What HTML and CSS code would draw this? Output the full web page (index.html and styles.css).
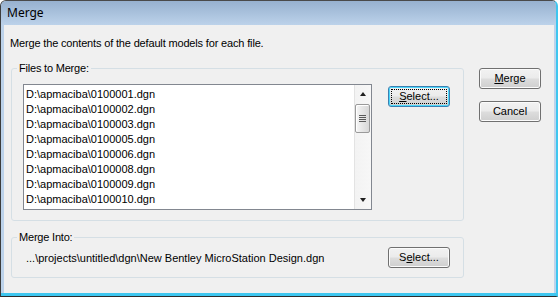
FILE: index.html
```html
<!DOCTYPE html>
<html>
<head>
<meta charset="utf-8">
<link rel="stylesheet" href="styles.css">
</head>
<body>
<div class="window">
  <div class="titlebar">Merge</div>
  <div class="client">
    <p class="desc">Merge the contents of the default models for each file.</p>
    <div class="main">
      <div class="groups">
        <fieldset class="group files">
          <legend>Files to Merge:</legend>
          <div class="files-row">
            <div class="listbox">
              <ul class="items">
                <li>D:\apmaciba\0100001.dgn</li>
                <li>D:\apmaciba\0100002.dgn</li>
                <li>D:\apmaciba\0100003.dgn</li>
                <li>D:\apmaciba\0100005.dgn</li>
                <li>D:\apmaciba\0100006.dgn</li>
                <li>D:\apmaciba\0100008.dgn</li>
                <li>D:\apmaciba\0100009.dgn</li>
                <li>D:\apmaciba\0100010.dgn</li>
              </ul>
              <div class="scrollbar">
                <div class="sb-btn"><span class="tri up"></span></div>
                <div class="sb-thumb"><span class="grip"></span><span class="grip"></span><span class="grip"></span><span class="grip"></span></div>
                <div class="sb-track"></div>
                <div class="sb-btn"><span class="tri down"></span></div>
              </div>
            </div>
            <button class="btn focused"><span class="focus-rect"><u>S</u>elect...</span></button>
          </div>
        </fieldset>
        <fieldset class="group into">
          <legend>Merge Into:</legend>
          <div class="into-row">
            <span class="path">...\projects\untitled\dgn\New Bentley MicroStation Design.dgn</span>
            <button class="btn">S<u>e</u>lect...</button>
          </div>
        </fieldset>
      </div>
      <div class="actions">
        <button class="btn"><u>M</u>erge</button>
        <button class="btn">Cancel</button>
      </div>
    </div>
  </div>
  <div class="bottom-edge"></div>
</div>
</body>
</html>
```

FILE: styles.css
```css
* { box-sizing: border-box; }
html, body { margin: 0; padding: 0; }
body {
  width: 558px;
  height: 297px;
  overflow: hidden;
  background: #ffffff;
  font-family: "Liberation Sans", Arial, sans-serif;
  font-size: 11px;
  color: #000;
}
.window {
  width: 558px;
  height: 297px;
  border-left: 1px solid #3d3d3d;
  border-top: 1px solid #4a4a4a;
  border-right: 2px solid #3ec6ef;
  border-bottom: 1px solid #2c2c2c;
  border-radius: 6px 6px 0 0;
  background: #bdd3eb;
  display: flex;
  flex-direction: column;
  overflow: hidden;
}
.titlebar {
  height: 24px;
  line-height: 23px;
  padding-left: 6px;
  font-family: "Noto Sans", "Open Sans", sans-serif;
  font-size: 12px;
  color: #000;
  background: linear-gradient(#97b1cf, #bcd2ea);
}
.client {
  width: 550px;
  height: 268px;
  margin-left: 3px;
  background: #f0f0f0;
  padding: 12px 0 0 6px;
}
.bottom-edge {
  height: 3px;
  background: #3ec6ef;
}
.desc {
  margin: 0;
  line-height: 13px;
  letter-spacing: -0.16px;
}
.main {
  display: flex;
  margin-top: 12px;
  margin-left: 1px;
}
.groups {
  width: 453px;
  display: flex;
  flex-direction: column;
}
.group {
  margin: 0;
  padding: 0;
  min-width: 0;
  border: 1px solid #d5dfe5;
  border-radius: 3px;
}
.group legend {
  margin-left: 5px;
  padding: 0 2px;
  line-height: 13px;
  letter-spacing: -0.2px;
  color: #000;
}
.into { margin-top: 10px; }
.files-row {
  display: flex;
  align-items: flex-start;
  padding: 9px 13px 10px 11px;
}
.listbox {
  width: 349px;
  height: 126px;
  border: 1px solid #828790;
  background: #fff;
  display: flex;
}
.items {
  list-style: none;
  margin: 0;
  padding: 2px 0 0 2px;
  flex: 1;
}
.items li {
  line-height: 15px;
  white-space: nowrap;
}
.scrollbar {
  width: 17px;
  display: flex;
  flex-direction: column;
  background: linear-gradient(to right, #e3e3e3 0, #e3e3e3 1px, #f3f3f3 1px, #f7f7f7 100%);
}
.sb-btn {
  height: 18px;
  display: flex;
  align-items: center;
  justify-content: center;
}
.tri {
  width: 0;
  height: 0;
  border-left: 3.5px solid transparent;
  border-right: 3.5px solid transparent;
}
.tri.up { border-bottom: 4px solid #202020; }
.tri.down { border-top: 4px solid #202020; }
.sb-thumb {
  height: 29px;
  margin: 1px 1px 0 1px;
  border: 1px solid #9a9a9a;
  border-radius: 2px;
  background: linear-gradient(to right, #f6f6f6, #e6e6e6 50%, #d8d8d8);
  box-shadow: inset 1px 1px 0 #ffffff;
  display: flex;
  flex-direction: column;
  align-items: center;
  justify-content: center;
  gap: 1px;
}
.grip {
  width: 7px;
  height: 1px;
  background: #5a5a5a;
}
.sb-track { flex: 1; }
.btn {
  width: 62px;
  height: 21px;
  padding: 0;
  font-family: "Liberation Sans", Arial, sans-serif;
  font-size: 11px;
  color: #000;
  border: 1px solid #707070;
  border-radius: 3px;
  background: linear-gradient(#f2f2f2 0%, #ebebeb 48%, #dddddd 52%, #cfcfcf 100%);
  box-shadow: inset 0 0 0 1px #fbfbfb;
  display: flex;
  align-items: center;
  justify-content: center;
  line-height: 13px;
}
.btn u { text-decoration: underline; text-underline-offset: 1px; }
.files-row .btn {
  margin-left: 16px;
  margin-top: 2px;
}
.btn.focused {
  border-color: #3c7fb1;
  box-shadow: inset 0 0 0 1px #49d7fb;
}
.focus-rect {
  display: flex;
  align-items: center;
  justify-content: center;
  width: 56px;
  height: 15px;
  border: 1px dotted #000;
}
.into-row {
  display: flex;
  align-items: center;
  padding: 3px 13px 9px 14px;
}
.path {
  flex: 1;
  white-space: nowrap;
}
.actions {
  margin-left: 15px;
  margin-top: 6px;
  display: flex;
  flex-direction: column;
  gap: 12px;
}
```
